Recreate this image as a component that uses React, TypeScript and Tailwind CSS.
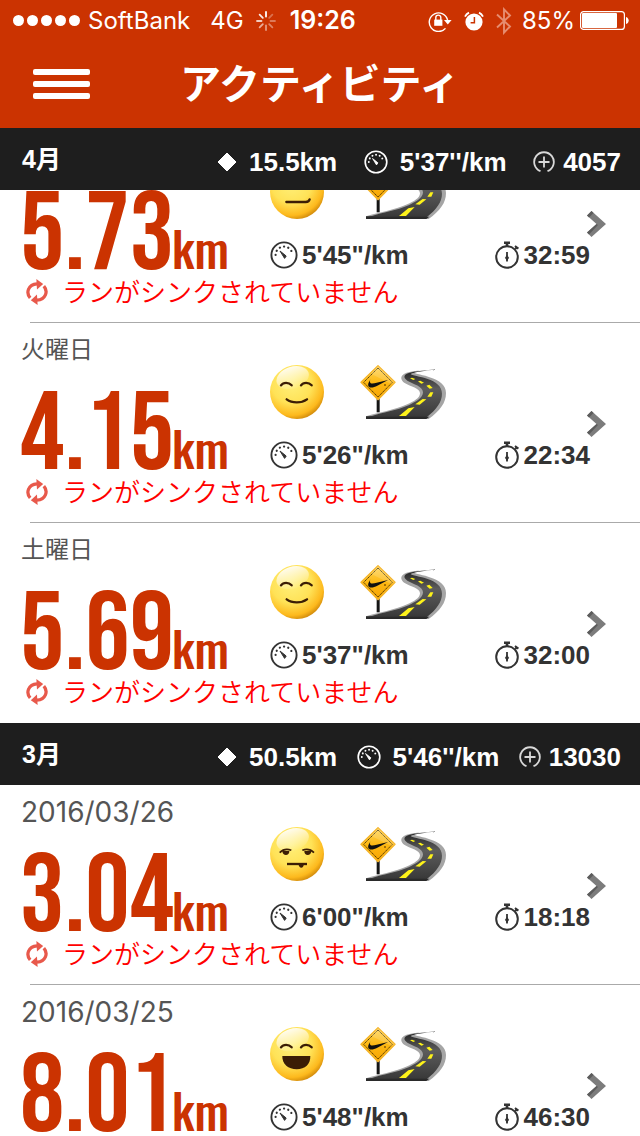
import React from 'react';

type Mood = 'flat' | 'smile' | 'tired' | 'laugh';

interface Run {
    id: number;
    date: string;
    distance: string;
    mood: Mood;
    pace: string;
    time: string;
}

interface Month {
    label: string;
    distance: string;
    pace: string;
    fuel: string;
    runs: Run[];
}

const months: Month[] = [
    {
        label: '4月',
        distance: '15.5km',
        pace: "5'37''/km",
        fuel: '4057',
        runs: [
            { id: 1, date: '', distance: '5.73', mood: 'flat', pace: '5\'45"/km', time: '32:59' },
            { id: 2, date: '火曜日', distance: '4.15', mood: 'smile', pace: '5\'26"/km', time: '22:34' },
            { id: 3, date: '土曜日', distance: '5.69', mood: 'smile', pace: '5\'37"/km', time: '32:00' },
        ],
    },
    {
        label: '3月',
        distance: '50.5km',
        pace: "5'46''/km",
        fuel: '13030',
        runs: [
            { id: 4, date: '2016/03/26', distance: '3.04', mood: 'tired', pace: '6\'00"/km', time: '18:18' },
            { id: 5, date: '2016/03/25', distance: '8.01', mood: 'laugh', pace: '5\'48"/km', time: '46:30' },
        ],
    },
];

const GaugeIcon: React.FC<{ className?: string }> = ({ className }) => (
    <svg viewBox="0 0 28 28" className={className} fill="none" stroke="currentColor" aria-hidden="true">
        <circle cx="14" cy="14" r="12.6" strokeWidth="1.9" />
        <path d="M5.6 14a8.4 8.4 0 0 1 16.8 0" strokeWidth="2.2" strokeDasharray="0.1 4.28" strokeLinecap="round" />
        <path d="M10 10l6.2 5-1.6 2.4z" fill="currentColor" strokeWidth="1" strokeLinejoin="round" />
    </svg>
);

const StopwatchIcon = () => (
    <svg viewBox="0 0 25 28" className="h-7 w-[25px]" fill="none" stroke="currentColor" aria-hidden="true">
        <circle cx="12" cy="16" r="10.8" strokeWidth="2" />
        <path d="M9 1.8h6M12 2v4" strokeWidth="2.6" />
        <path d="M20.2 8l2-2M20 5l3.4 2.6" strokeWidth="2" />
        <path d="M12 11v9.5" strokeWidth="1.8" />
        <path d="M12 14.5l1.5 2.2L12 19.5l-1.5-2.8z" fill="currentColor" />
    </svg>
);

const FuelIcon = () => (
    <svg viewBox="0 0 22 22" className="size-[22px] text-[#d8d8d8]" fill="none" stroke="currentColor" aria-hidden="true">
        <path d="M7.5 20.2a9.8 9.8 0 1 1 7 0" strokeWidth="1.8" />
        <path d="M11 5.5v11M5.5 11h11" strokeWidth="1.8" />
    </svg>
);

const SyncIcon = () => (
    <svg viewBox="0 0 66 80" className="h-[26px] w-[22px]" fill="none" stroke="#e8594b" strokeWidth="10" aria-hidden="true">
        <path d="M12 58C-2 42 6 17 33 15" />
        <path d="M54 22c14 16 6 41-21 43" />
        <path d="M31 0l21 15-19 17z" fill="#e8594b" stroke="none" />
        <path d="M35 80L14 65l19-17z" fill="#e8594b" stroke="none" />
    </svg>
);

const ChevronIcon = () => (
    <svg viewBox="0 0 19 26" className="h-[26px] w-[19px]" aria-hidden="true">
        <path d="M0 4.5L4.5 0 19 13 4.5 26 0 21.5 9.5 13z" fill="#7c7c7c" />
        <path d="M0 4.5L4.5 0 6.5 2 2 6.5zM0 21.5L9.5 13l1.5 1L2 23.5z" fill="#5c5c5c" />
    </svg>
);

const MoodFace: React.FC<{ mood: Mood; id: number }> = ({ mood, id }) => (
    <svg viewBox="0 0 162 162" className="size-[54px]" fill="none" stroke="#3b1d05" aria-hidden="true">
        <defs>
            <radialGradient id={`face-${id}`} cx="0.4" cy="0.34" r="0.74">
                <stop offset="0" stopColor="#fff07a" />
                <stop offset="0.5" stopColor="#ffe257" />
                <stop offset="0.8" stopColor="#fdb91d" />
                <stop offset="1" stopColor="#b97000" />
            </radialGradient>
            <linearGradient id={`shine-${id}`} x1="0" y1="0" x2="0" y2="1">
                <stop offset="0" stopColor="#fff" stopOpacity="0.9" />
                <stop offset="1" stopColor="#fff" stopOpacity="0.05" />
            </linearGradient>
        </defs>
        <circle cx="81" cy="81" r="81" fill={`url(#face-${id})`} stroke="none" />
        <ellipse cx="68" cy="38" rx="50" ry="33" fill={`url(#shine-${id})`} stroke="none" transform="rotate(-18 68 38)" />
        {mood !== 'tired' && (
            <path d="M33 61c7-10 23-10 32 0M93 61c7-10 23-10 32 0" strokeWidth="7" strokeLinecap="round" />
        )}
        {mood === 'smile' && <path d="M50 103c16 12 44 12 61 0" strokeWidth="7" strokeLinecap="round" />}
        {mood === 'laugh' && <path d="M37 87h84c1 24-16 40-41 40S36 111 37 87z" fill="#3b1d05" stroke="none" />}
        {mood === 'flat' && <path d="M49 111h58c8 0 11-3 12-8" strokeWidth="7" strokeLinecap="round" />}
        {mood === 'tired' && (
            <>
                <path d="M29 77c8-8 22-12 35-7M97 70c13-5 27-1 35 7" strokeWidth="5" />
                <path d="M37 72h21c1 16-21 16-21 0zM103 72h21c0 16-22 16-21 0z" fill="#3b1d05" stroke="none" />
                <path d="M51 111h60" strokeWidth="7" />
                <path d="M86 112h15c1 14-15 14-15 0z" fill="#3b1d05" stroke="none" />
            </>
        )}
    </svg>
);

const RoadPicture: React.FC<{ id: number }> = ({ id }) => (
    <svg viewBox="0 0 264 162" className="h-[54px] w-[88px]" aria-hidden="true">
        <defs>
            <linearGradient id={`sign-${id}`} x1="0" y1="0" x2="0" y2="1">
                <stop offset="0" stopColor="#ffd65a" />
                <stop offset="0.5" stopColor="#fdb813" />
                <stop offset="1" stopColor="#f7a400" />
            </linearGradient>
            <linearGradient id={`road-${id}`} x1="0" y1="0" x2="0" y2="1">
                <stop offset="0" stopColor="#222" />
                <stop offset="0.4" stopColor="#5c5c5c" />
                <stop offset="1" stopColor="#383838" />
            </linearGradient>
        </defs>
        <path d="M50 98h9v44h-9z" fill="#151515" />
        <path
            d="M225 15C190 15 150 17 132 27c-12 7-10 19 2 27 18 11 46 15 46 31 0 15-20 25-38 33-40 17-84 24-124 36v8h188c34-25 52-48 52-78 0-26-22-38-45-46-22-8-48-11-52-16 10-5 38-6 64-9z"
            fill="#a5a5a5"
        />
        <path
            d="M225 15C190 17 152 19 138 28c-8 6-5 13 4 19 19 11 46 16 47 35 0 17-23 29-43 39-36 16-80 22-110 32l-18 1v3h182c30-25 46-46 46-71 0-23-20-36-43-44-22-8-49-10-51-15 8-6 47-10 73-13z"
            fill={`url(#road-${id})`}
        />
        <path d="M18 155h190l-9 7H18z" fill="#2a2a2a" />
        <path
            d="M117 153l28-23 19-4-26 27zM166 118l22-16 11 1-20 16zM202 95l9-13 9 0-6 13zM199 62l9-3 10 10-9 2zM174 49l7-2 11 6-8 3zM150 40l6-2 10 4-6 3z"
            fill="#fdf21a"
        />
        <path d="M54 2l51 50-51 52L3 52z" fill={`url(#sign-${id})`} stroke="#f5b52a" strokeWidth="4" strokeLinejoin="round" />
        <path d="M54 9l43 43-43 44-43-44z" fill="none" stroke="#3a2a08" strokeWidth="2.5" strokeDasharray="5 1.5" />
        <path d="M54 2l51 50-10 6L33 26z" fill="#fff" opacity="0.15" />
        {/* swoosh */}
        <path d="M32 43c-6 9-11 18-4 23 6 4 15 0 24-4l32-17-34 8c-10 3-19 4-20-2-1-3 0-5 2-8z" fill="#111" />
        <circle cx="75" cy="60" r="3" fill="#8a5a00" />
    </svg>
);

const StatusBar = () => (
    <div className="flex h-10 items-center pt-px pr-[11px] pl-[13px] text-2xl">
        <div className="flex gap-[3px]">
            {[0, 1, 2, 3, 4].map((dot) => (
                <span key={dot} className="size-[11px] rounded-full bg-white" />
            ))}
        </div>
        <span className="ml-2">SoftBank</span>
        <span className="ml-5">4G</span>
        <svg viewBox="0 0 20 20" className="ml-3 size-5" stroke="#fff" strokeWidth="1.8" strokeLinecap="round" aria-hidden="true">
            {[1, 0.3, 0.35, 0.4, 0.5, 0.6, 0.75, 0.9].map((opacity, i) => (
                <path key={i} d="M10 1v4.5" opacity={opacity} transform={`rotate(${i * 45} 10 10)`} />
            ))}
        </svg>
        <span className="ml-[14px] text-[25px] font-semibold">19:26</span>
        <div className="ml-auto flex items-center">
            <svg viewBox="0 0 24 22" className="h-[22px] w-6" fill="none" stroke="#fff" aria-hidden="true">
                <path d="M17.5 18.4A9.3 9.3 0 1 1 19.6 10" strokeWidth="1.4" />
                <path d="M16 10h7.6l-3.8 4.4z" fill="#fff" stroke="none" />
                <path d="M6.2 9.6h8.2v6.2H6.2z" fill="#fff" stroke="none" />
                <path d="M7.8 10V7.6a2.5 2.5 0 0 1 5 0V10" strokeWidth="1.4" />
            </svg>
            <svg viewBox="0 0 20 20" className="ml-3 size-5" fill="none" aria-hidden="true">
                <circle cx="10" cy="11" r="8.6" fill="#fff" />
                <path d="M1 5.6A9 9 0 0 1 5 1.6M19 5.6a9 9 0 0 0-4-4" stroke="#fff" strokeWidth="1.8" />
                <path d="M10.4 6v5.8H6.6" stroke="#cb3301" strokeWidth="1.5" />
            </svg>
            <svg viewBox="0 0 16 28" className="ml-3 h-7 w-4" fill="none" stroke="#e68d70" strokeWidth="1.9" aria-hidden="true">
                <path d="M1 7.5l13 12-6 6.2V2.3l6 6.2-13 12" />
            </svg>
            <span className="ml-[10px]">85%</span>
            <svg viewBox="0 0 49 19" className="ml-[5px] h-[19px] w-[49px]" fill="#fff" aria-hidden="true">
                <rect x="0.6" y="0.6" width="43.8" height="17.8" rx="3" fill="none" stroke="#fff" strokeWidth="1.2" />
                <rect x="2" y="2" width="35" height="15" rx="1" />
                <path d="M46 6c3.6 1 3.6 6 0 7z" />
            </svg>
        </div>
    </div>
);

const MonthHeader: React.FC<{ month: Month }> = ({ month }) => (
    <header className="sticky top-0 z-10 flex h-[62px] items-center justify-between bg-[#1e1e1e] pt-[2px] pr-[19px] pl-[22px] font-['Liberation_Sans','Noto_Sans_CJK_JP',sans-serif] text-[26px] font-bold text-white">
        <h2 className="text-[25px]">{month.label}</h2>
        <div className="flex w-[404px] items-center justify-between pt-1">
            <span className="flex items-center gap-3">
                <svg viewBox="0 0 20 20" className="size-5" aria-hidden="true">
                    <path d="M10 1l9 9-9 9-9-9z" fill="#fff" stroke="#fff" strokeWidth="1" strokeLinejoin="round" />
                </svg>
                {month.distance}
            </span>
            <span className="flex items-center gap-3">
                <GaugeIcon className="size-6" />
                {month.pace}
            </span>
            <span className="flex items-center gap-2">
                <FuelIcon />
                {month.fuel}
            </span>
        </div>
    </header>
);

const RunRow: React.FC<{ run: Run; last: boolean }> = ({ run, last }) => (
    <li>
        <a href={`#run-${run.id}`} className="block h-[200px] pt-[10px]">
            <p className="h-8 pl-[21px] text-2xl leading-[34px] text-[#555]">
                {run.date.includes('/') ? <time className="text-[28px]">{run.date}</time> : run.date}
            </p>
            <div className="flex h-[104px] pr-[34px] pl-5">
                <p className="flex w-[250px] items-baseline self-end text-[#cb3301]">
                    <span className="w-[152px] font-['Bebas_Neue','Liberation_Sans_Narrow',sans-serif] text-[111px] leading-[66px]">
                        {run.distance}
                    </span>
                    <span className="font-['Oswald','Liberation_Sans_Narrow',sans-serif] text-5xl leading-9 font-medium">
                        km
                    </span>
                </p>
                <div className="flex flex-1 flex-col justify-between font-['Liberation_Sans',sans-serif] text-[26px] leading-7 font-bold text-[#333]">
                    <div className="flex gap-9">
                        <MoodFace mood={run.mood} id={run.id} />
                        <RoadPicture id={run.id} />
                    </div>
                    <div className="flex items-center justify-between">
                        <span className="flex items-center gap-1">
                            <GaugeIcon className="size-7" />
                            {run.pace}
                        </span>
                        <span className="flex items-center gap-1">
                            <StopwatchIcon />
                            {run.time}
                        </span>
                    </div>
                </div>
                <span className="-ml-[3px] flex items-center pt-[14px]">
                    <ChevronIcon />
                </span>
            </div>
            <div className="flex h-[46px] items-center gap-[14px] pl-[26px] text-[26px] leading-8 text-[#ff0000]">
                <SyncIcon />
                <span className="pb-[2px] font-['Noto_Sans_CJK_JP',sans-serif] font-[350]">ランがシンクされていません</span>
            </div>
            {!last && <div className="mt-[7px] ml-[30px] h-px bg-[#aaa]" />}
        </a>
    </li>
);

export default function App() {
    return (
        <div className="flex h-screen flex-col overflow-hidden bg-white font-['Inter','Noto_Sans_CJK_JP',sans-serif]">
            <div className="shrink-0 bg-[#cb3301] text-white">
                <StatusBar />
                <nav className="grid h-[88px] grid-cols-[1fr_auto_1fr] items-center">
                    <button type="button" aria-label="メニュー" className="ml-[33px] flex w-[57px] flex-col gap-[6px]">
                        <span className="h-[6px] rounded-xs bg-white" />
                        <span className="h-[6px] rounded-xs bg-white" />
                        <span className="h-[6px] rounded-xs bg-white" />
                    </button>
                    <h1 className="text-[41px] leading-[88px] font-semibold">アクティビティ</h1>
                </nav>
            </div>
            <main className="min-h-0 flex-1 overflow-hidden">
                {months.map((month, i) => (
                    <section key={month.label}>
                        <MonthHeader month={month} />
                        {/* the first month is scrolled partly under its header */}
                        <ul className={i === 0 ? '-mt-[67px]' : ''}>
                            {month.runs.map((run, j) => (
                                <RunRow key={run.id} run={run} last={i === 0 && j === month.runs.length - 1} />
                            ))}
                        </ul>
                    </section>
                ))}
            </main>
        </div>
    );
}
